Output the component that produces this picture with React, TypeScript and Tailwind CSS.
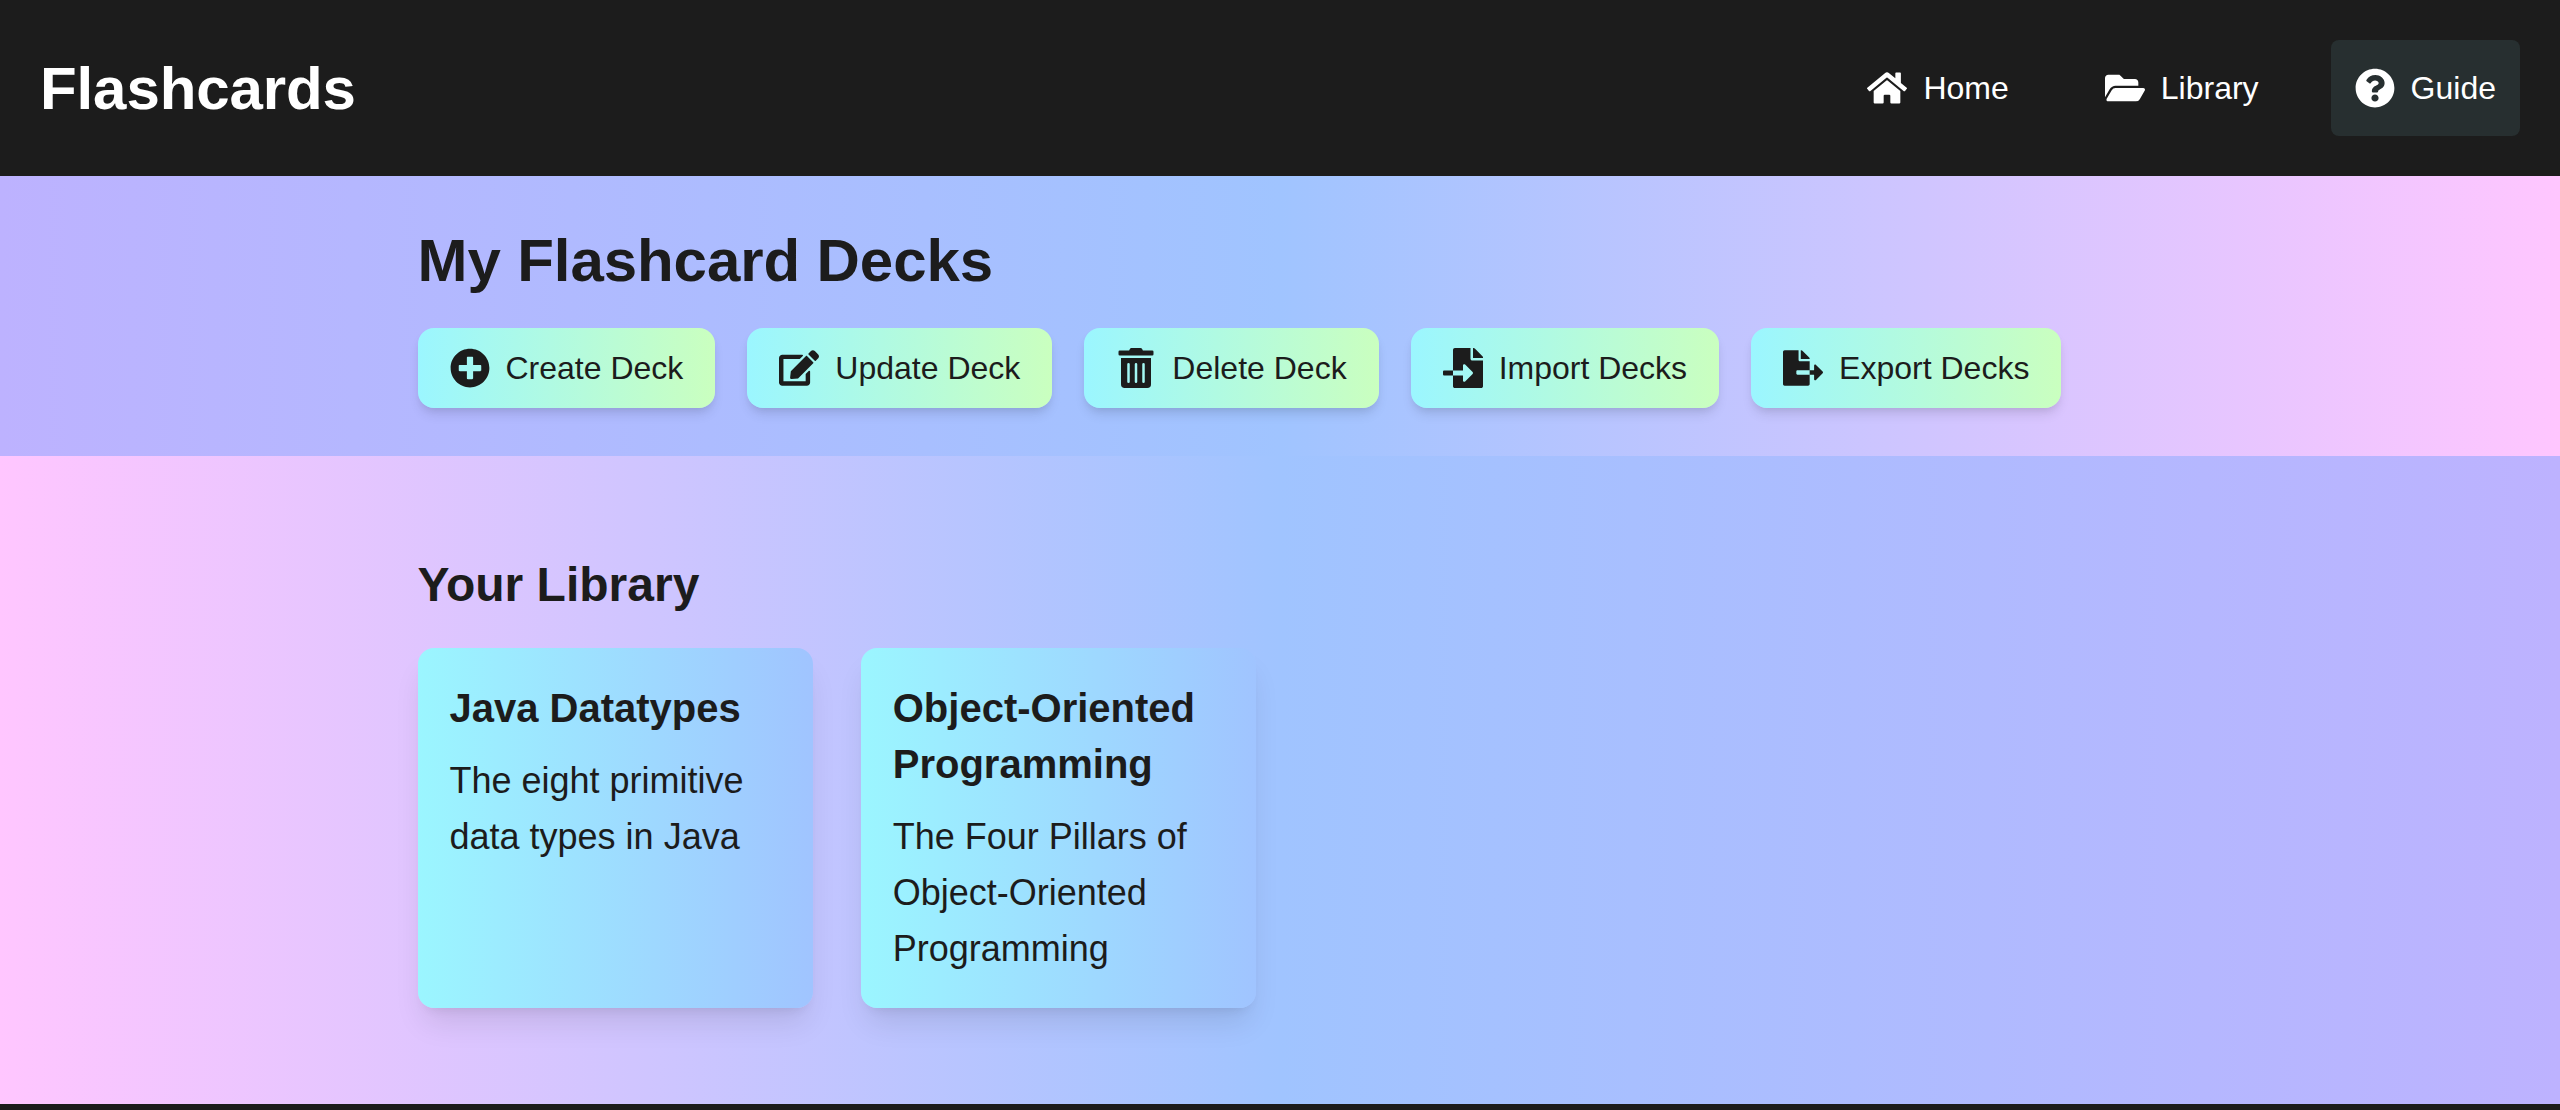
import type { ReactNode } from "react";
import {
  FaHome,
  FaFolderOpen,
  FaQuestionCircle,
  FaPlusCircle,
  FaEdit,
  FaTrashAlt,
  FaFileImport,
  FaFileExport,
} from "react-icons/fa";

function NavItem({ icon, label, active = false }: { icon: ReactNode; label: string; active?: boolean }) {
  return (
    <a
      className={
        active
          ? "flex h-24 items-center gap-4 rounded-lg bg-[#272f30] px-6"
          : "flex h-24 items-center gap-4 rounded-lg px-6"
      }
    >
      {icon}
      <span>{label}</span>
    </a>
  );
}

function DeckButton({ icon, label }: { icon: ReactNode; label: string }) {
  return (
    <button className="flex h-20 items-center gap-4 rounded-2xl bg-[linear-gradient(to_right,#9bf6ff,#caffbf)] px-8 shadow-[0_8px_12px_-2px_rgba(0,0,0,0.1),0_4px_8px_-4px_rgba(0,0,0,0.1)]">
      {icon}
      <span>{label}</span>
    </button>
  );
}

function DeckCard({ title, description }: { title: string; description: string }) {
  return (
    <article className="rounded-2xl bg-[linear-gradient(to_right,#9bf6ff,#a0c4ff)] px-8 pt-8 pb-[31px] shadow-[0_20px_30px_-6px_rgba(0,0,0,0.1),0_8px_12px_-8px_rgba(0,0,0,0.1)]">
      <h3 className="mb-[17px] text-[40px] leading-[56px] font-bold">{title}</h3>
      <p className="text-[36px] leading-[56px]">{description}</p>
    </article>
  );
}

export default function App() {
  return (
    <div className="flex min-h-[1110px] flex-col bg-[#1c1c1c] font-['Liberation_Sans',Arial,sans-serif] text-[32px] leading-[48px] text-[#1c1c1c]">
      <header className="flex h-44 items-center justify-between bg-[#1c1c1c] px-10 text-white">
        <h1 className="pt-[2px] text-[60px] leading-[72px] font-bold tracking-[-0.1px]">Flashcards</h1>
        <nav className="flex gap-12">
          <NavItem icon={<FaHome size={40} />} label="Home" />
          <NavItem icon={<FaFolderOpen size={40} />} label="Library" />
          <NavItem icon={<FaQuestionCircle size={40} />} label="Guide" active />
        </nav>
      </header>

      <section className="bg-[linear-gradient(to_right,#bdb2ff,#a0c4ff,#ffc6ff)] py-12">
        <div className="mx-auto w-[1725px]">
          <h2 className="mb-[31px] pt-px text-[60px] leading-[72px] font-bold tracking-[-0.08px]">
            My Flashcard Decks
          </h2>
          <div className="flex gap-8">
            <DeckButton icon={<FaPlusCircle size={40} />} label="Create Deck" />
            <DeckButton icon={<FaEdit size={40} />} label="Update Deck" />
            <DeckButton icon={<FaTrashAlt size={40} />} label="Delete Deck" />
            <DeckButton icon={<FaFileImport size={40} />} label="Import Decks" />
            <DeckButton icon={<FaFileExport size={40} />} label="Export Decks" />
          </div>
        </div>
      </section>

      <main className="bg-[linear-gradient(to_right,#ffc6ff,#a0c4ff,#bdb2ff)] py-24">
        <div className="mx-auto w-[1725px]">
          <h2 className="mb-[31px] pt-px text-[48px] leading-[64px] font-bold">Your Library</h2>
          <div className="grid grid-cols-4 gap-12">
            <DeckCard title="Java Datatypes" description="The eight primitive data types in Java" />
            <DeckCard
              title="Object-Oriented Programming"
              description="The Four Pillars of Object-Oriented Programming"
            />
          </div>
        </div>
      </main>
    </div>
  );
}
